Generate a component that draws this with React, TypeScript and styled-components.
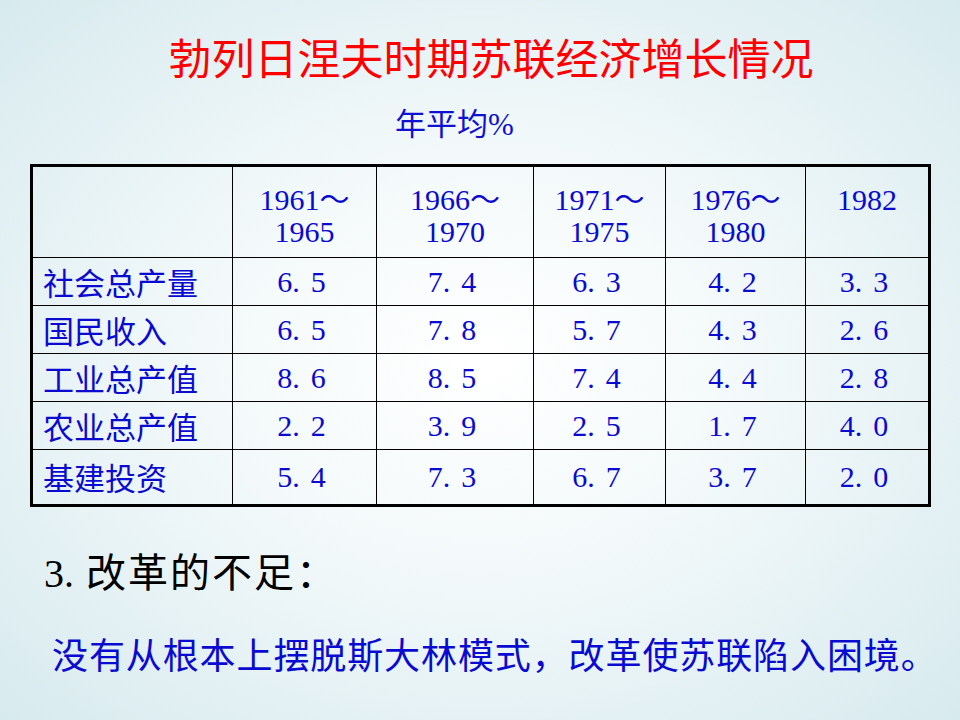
import React from "react";
import styled, { createGlobalStyle } from "styled-components";

const Global = createGlobalStyle`
  html, body { margin: 0; padding: 0; }
  body { width: 960px; height: 720px; overflow: hidden; }
`;

const CJK = `"Noto Sans CJK SC", sans-serif`;
const SERIF_CJK = `"Liberation Serif", "Noto Sans CJK SC", serif`;

const Slide = styled.div`
  width: 960px;
  height: 720px;
  box-sizing: border-box;
  display: flex;
  flex-direction: column;
  align-items: flex-start;
  background: radial-gradient(ellipse farthest-corner at 50% 50%, #ffffff 0%, #f3f9fa 40%, #d7eaee 100%);
  font-family: ${CJK};
`;

const Title = styled.h1`
  align-self: stretch;
  margin: 26px 0 0 0;
  padding-left: 22px;
  text-align: center;
  font-family: ${CJK};
  font-weight: 400;
  font-size: 43px;
  line-height: 60px;
  color: #ff0000;
`;

const Subtitle = styled.div`
  margin: 19px 0 0 395px;
  font-family: ${SERIF_CJK};
  font-size: 31px;
  line-height: 40px;
  color: #1010d0;
`;

const Table = styled.table`
  margin: 19px 0 0 30px;
  width: 901px;
  table-layout: fixed;
  border-collapse: collapse;
  border: 3px solid #000;
  color: #0a0ad0;
`;

const HeadCell = styled.td`
  border: 1px solid #000;
  height: 73px;
  padding: 17px 0 0 0;
  vertical-align: top;
  text-align: center;
  font-family: ${SERIF_CJK};
  font-size: 30px;
  line-height: 32px;
`;

const LabelCell = styled.td<{ $tall?: boolean }>`
  border: 1px solid #000;
  height: ${(p) => (p.$tall ? 54 : 47)}px;
  padding: 0 0 0 10px;
  vertical-align: middle;
  text-align: left;
  font-family: ${CJK};
  font-size: 31px;
  line-height: 40px;
  white-space: nowrap;
`;

const NumCell = styled.td<{ $tall?: boolean }>`
  border: 1px solid #000;
  height: ${(p) => (p.$tall ? 54 : 47)}px;
  padding: 0 6px 0 0;
  vertical-align: middle;
  text-align: center;
  font-family: ${SERIF_CJK};
  font-size: 30px;
  line-height: 40px;
  white-space: nowrap;
`;

const Frac = styled.span`
  margin-left: 11px;
`;

const Section = styled.div`
  margin: 42px 0 0 44px;
  font-family: ${SERIF_CJK};
  font-size: 40px;
  line-height: 50px;
  letter-spacing: 2px;
  color: #000;
`;

const SectionNum = styled.span`
  margin-right: 12px;
  letter-spacing: 0;
`;

const Conclusion = styled.div`
  margin: 31px 0 0 52px;
  font-family: ${CJK};
  font-size: 36px;
  line-height: 46px;
  letter-spacing: 0.9px;
  color: #0a0ad0;
`;

const widths = [201, 144, 157, 132, 140, 124];

const headers: string[][] = [
  ["1961～", "1965"],
  ["1966～", "1970"],
  ["1971～", "1975"],
  ["1976～", "1980"],
  ["1982"],
];

const rows: string[][] = [
  ["社会总产量", "6.5", "7.4", "6.3", "4.2", "3.3"],
  ["国民收入", "6.5", "7.8", "5.7", "4.3", "2.6"],
  ["工业总产值", "8.6", "8.5", "7.4", "4.4", "2.8"],
  ["农业总产值", "2.2", "3.9", "2.5", "1.7", "4.0"],
  ["基建投资", "5.4", "7.3", "6.7", "3.7", "2.0"],
];

function Num({ value }: { value: string }) {
  const [a, b] = value.split(".");
  return (
    <>
      {a}.<Frac>{b}</Frac>
    </>
  );
}

export default function App() {
  return (
    <>
      <Global />
      <Slide>
        <Title>勃列日涅夫时期苏联经济增长情况</Title>
        <Subtitle>年平均%</Subtitle>
        <Table>
          <colgroup>
            {widths.map((w, i) => (
              <col key={i} style={{ width: w }} />
            ))}
          </colgroup>
          <tbody>
            <tr>
              <HeadCell />
              {headers.map((h, i) => (
                <HeadCell key={i}>
                  {h.map((line, j) => (
                    <div key={j}>{line}</div>
                  ))}
                </HeadCell>
              ))}
            </tr>
            {rows.map((r, i) => {
              const tall = i === rows.length - 1;
              return (
                <tr key={i}>
                  <LabelCell $tall={tall}>{r[0]}</LabelCell>
                  {r.slice(1).map((v, j) => (
                    <NumCell key={j} $tall={tall}>
                      <Num value={v} />
                    </NumCell>
                  ))}
                </tr>
              );
            })}
          </tbody>
        </Table>
        <Section>
          <SectionNum>3.</SectionNum>改革的不足：
        </Section>
        <Conclusion>没有从根本上摆脱斯大林模式，改革使苏联陷入困境。</Conclusion>
      </Slide>
    </>
  );
}
